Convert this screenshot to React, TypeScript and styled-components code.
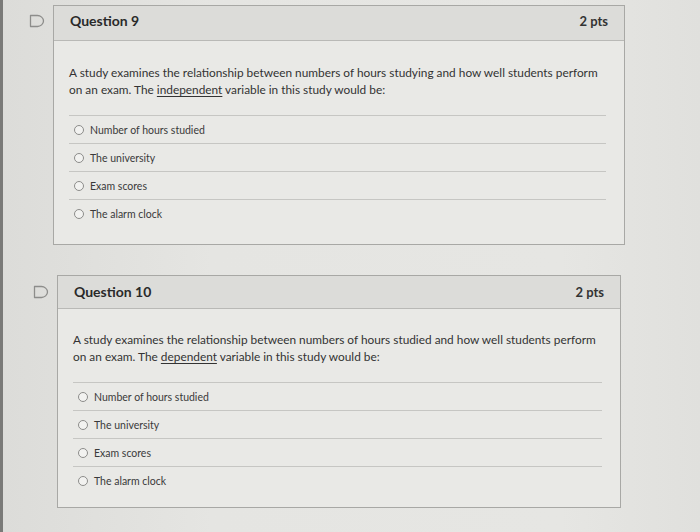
import React from 'react'
import styled, { createGlobalStyle } from 'styled-components'

type Option = { label: string }

type Question = {
  number: number
  points: string
  before: string
  keyword: string
  after: string
  options: Option[]
  left: number
  width: number
  headerHeight: number
  headerLift: number
  bodyTop: number
  promptWidth: number
  listGap: number
  bottom: number
  flagTop: number
}

const options: Option[] = [
  { label: 'Number of hours studied' },
  { label: 'The university' },
  { label: 'Exam scores' },
  { label: 'The alarm clock' },
]

const questions: Question[] = [
  {
    number: 9,
    points: '2 pts',
    before:
      'A study examines the relationship between numbers of hours studying and how well students perform on an exam. The ',
    keyword: 'independent',
    after: ' variable in this study would be:',
    options,
    left: 29,
    width: 572,
    headerHeight: 35,
    headerLift: 5,
    bodyTop: 23,
    promptWidth: 540,
    listGap: 17,
    bottom: 17,
    flagTop: 9,
  },
  {
    number: 10,
    points: '2 pts',
    before:
      'A study examines the relationship between numbers of hours studied and how well students perform on an exam. The ',
    keyword: 'dependent',
    after: ' variable in this study would be:',
    options,
    left: 33,
    width: 564,
    headerHeight: 33,
    headerLift: 1,
    bodyTop: 22,
    promptWidth: 530,
    listGap: 17,
    bottom: 13,
    flagTop: 10,
  },
]

const GlobalStyle = createGlobalStyle`
  html, body {
    margin: 0;
    padding: 0;
    background: #e3e3e0;
  }
  body {
    font-family: Lato, "Open Sans", sans-serif;
    color: #2f2f2f;
  }
`

const Page = styled.main`
  min-height: 532px;
  box-sizing: border-box;
  border-left: 3px solid #7a7a78;
  padding-top: 5px;
  display: flex;
  flex-direction: column;
  gap: 30px;
  background: linear-gradient(90deg, #dcdcd9 0%, #e5e5e2 30%, #e6e6e3 80%, #e0e0dd 100%);
`

const QuestionRow = styled.section<{ $left: number }>`
  display: flex;
  align-items: flex-start;
  margin-left: ${({ $left }) => $left - 3}px;
`

const FlagColumn = styled.div<{ $top: number }>`
  width: 24px;
  flex: none;
  padding-top: ${({ $top }) => $top}px;
  display: flex;
`

const Card = styled.article<{ $width: number }>`
  width: ${({ $width }) => $width}px;
  box-sizing: border-box;
  border: 1px solid #a8a8a5;
  background: #e9e9e6;
`

const Header = styled.header<{ $height: number; $lift: number }>`
  height: ${({ $height }) => $height}px;
  box-sizing: border-box;
  display: flex;
  align-items: center;
  justify-content: space-between;
  padding: 0 16px ${({ $lift }) => $lift}px;
  background: #dcdcd9;
  border-bottom: 1px solid #b9b9b6;
`

const Title = styled.h3`
  margin: 0;
  font-size: 14px;
  font-weight: 700;
  color: #2a2a2a;
`

const Points = styled.span`
  font-size: 13px;
  font-weight: 700;
  color: #333;
`

const Body = styled.div<{ $top: number; $bottom: number }>`
  padding: ${({ $top }) => $top}px 8px ${({ $bottom }) => $bottom}px 15px;
`

const Prompt = styled.p<{ $gap: number; $width: number }>`
  max-width: ${({ $width }) => $width}px;
  margin: 0 0 ${({ $gap }) => $gap}px;
  font-size: 11.85px;
  line-height: 17px;
  color: #333;

  u {
    text-decoration: underline;
    text-underline-offset: 2px;
  }
`

const OptionList = styled.ul`
  list-style: none;
  margin: 0 10px 0 0;
  padding: 0;
`

const OptionRow = styled.li`
  height: 27px;
  border-top: 1px solid #c6c6c3;
  display: flex;
  align-items: center;
  gap: 6px;
  padding-left: 5px;
  font-size: 10.5px;
  color: #3a3a3a;
`

const Radio = styled.span`
  width: 8px;
  height: 8px;
  border-radius: 50%;
  border: 1px solid #8c8c8a;
  background: #f2f2f0;
  flex: none;
`

const Flag = () => (
  <svg width="16" height="14" viewBox="0 0 16 14" fill="none">
    <path
      d="M1.5 1.5 H8.5 C11.5 1.5 14.5 4 14.5 7 C14.5 10 11.5 12.5 8.5 12.5 H1.5 Z"
      stroke="#8d8d8b"
      strokeWidth="1.3"
      strokeLinejoin="round"
    />
  </svg>
)

const QuestionCard = ({ q }: { q: Question }) => (
  <QuestionRow $left={q.left}>
    <FlagColumn $top={q.flagTop}>
      <Flag />
    </FlagColumn>
    <Card $width={q.width}>
      <Header $height={q.headerHeight} $lift={q.headerLift}>
        <Title>Question {q.number}</Title>
        <Points>{q.points}</Points>
      </Header>
      <Body $top={q.bodyTop} $bottom={q.bottom}>
        <Prompt $gap={q.listGap} $width={q.promptWidth}>
          {q.before}
          <u>{q.keyword}</u>
          {q.after}
        </Prompt>
        <OptionList>
          {q.options.map((o, i) => (
            <OptionRow key={i}>
              <Radio />
              {o.label}
            </OptionRow>
          ))}
        </OptionList>
      </Body>
    </Card>
  </QuestionRow>
)

const App = () => (
  <>
    <GlobalStyle />
    <Page>
      {questions.map((q) => (
        <QuestionCard key={q.number} q={q} />
      ))}
    </Page>
  </>
)

export default App
